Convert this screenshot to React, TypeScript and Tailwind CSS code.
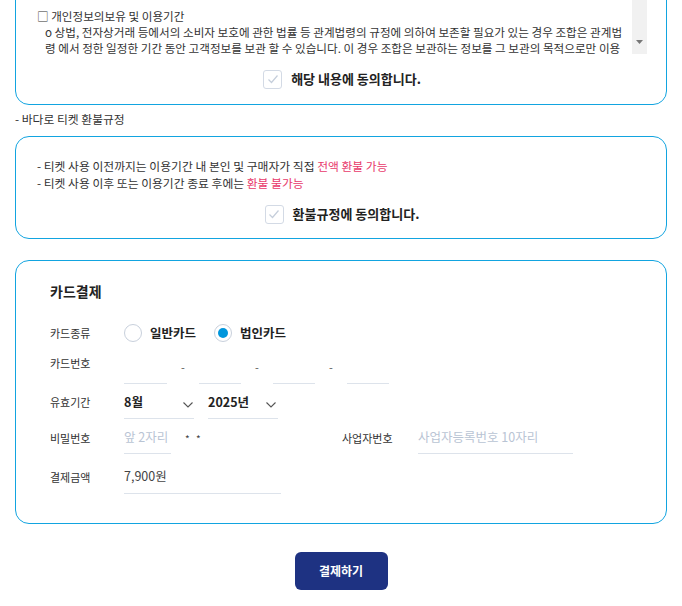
import React from "react";

const font = { fontFamily: '"Noto Sans CJK KR", "Noto Sans", sans-serif' };

function AgreeBox({ label }: { label: string }) {
  return (
    <div className="flex items-center justify-center">
      <span className="w-[19px] h-[19px] border border-[#d3dae5] rounded-[3px] flex items-center justify-center bg-white">
        <svg width="12" height="10" viewBox="0 0 12 10" fill="none">
          <polyline points="1.5,5.5 4.5,8.5 10.5,1.5" stroke="#c5cedb" strokeWidth="1.2" />
        </svg>
      </span>
      <span className="ml-[9px] text-[13px] font-bold text-[#222] leading-[20px]">{label}</span>
    </div>
  );
}

function Chevron() {
  return (
    <svg width="10" height="6" viewBox="0 0 10 6" fill="none">
      <polyline points="0.5,0.5 5,5 9.5,0.5" stroke="#555" strokeWidth="1.1" />
    </svg>
  );
}

export default function App() {
  return (
    <div className="bg-white min-h-screen px-[15px] pb-[16px] text-[#333]" style={font}>
      {/* 개인정보 동의 */}
      <div className="-mt-[24px] border border-[#12a4e0] rounded-[14px] pl-[21px] pr-[19px] pb-[15px]">
        <div className="flex h-[77px]">
          <div className="flex-1 overflow-hidden pt-[31px] text-[11.6px] leading-[16px] text-[#333]">
            <p>□ 개인정보의보유 및 이용기간</p>
            <p className="pl-[8px]">
              o 상법, 전자상거래 등에서의 소비자 보호에 관한 법률 등 관계법령의 규정에 의하여 보존할 필요가 있는 경우 조합은 관계법령 에서 정한 일정한 기간 동안 고객정보를 보관 할 수 있습니다. 이 경우 조합은 보관하는 정보를 그 보관의 목적으로만 이용
            </p>
          </div>
          <div className="w-[15px] bg-[#f1f1f1] flex flex-col justify-end items-center pb-[10px]">
            <svg width="7" height="4" viewBox="0 0 7 4">
              <polygon points="0,0 7,0 3.5,4" fill="#777" />
            </svg>
          </div>
        </div>
        <div className="mt-[15px]">
          <AgreeBox label="해당 내용에 동의합니다." />
        </div>
      </div>

      <p className="mt-[6px] text-[11.8px] leading-[16px]">- 바다로 티켓 환불규정</p>

      {/* 환불규정 */}
      <div className="mt-[9px] border border-[#12a4e0] rounded-[14px] pl-[21px] pr-[19px] pt-[20px] pb-[14px]">
        <div className="text-[11.8px] leading-[17px] text-[#333]">
          <p>
            - 티켓 사용 이전까지는 이용기간 내 본인 및 구매자가 직접 <span className="text-[#e8396b]">전액 환불 가능</span>
          </p>
          <p>
            - 티켓 사용 이후 또는 이용기간 종료 후에는 <span className="text-[#e8396b]">환불 불가능</span>
          </p>
        </div>
        <div className="mt-[13px]">
          <AgreeBox label="환불규정에 동의합니다." />
        </div>
      </div>

      {/* 카드결제 */}
      <div className="mt-[21px] border border-[#12a4e0] rounded-[14px] pl-[34px] pr-[20px] pt-[20px] pb-[29px]">
        <h2 className="text-[14px] leading-[20px] font-bold text-[#222]">카드결제</h2>

        <div className="mt-[22px] flex items-center h-[20px]">
          <span className="w-[74px] text-[11px] text-[#333]">카드종류</span>
          <span className="w-[18px] h-[18px] rounded-full border border-[#c8d0dc] bg-white" />
          <span className="ml-[8px] text-[12.5px] font-bold text-[#222]">일반카드</span>
          <span className="ml-[18px] w-[18px] h-[18px] rounded-full border border-[#c8d0dc] bg-white flex items-center justify-center">
            <span className="w-[10px] h-[10px] rounded-full bg-[#0096dc]" />
          </span>
          <span className="ml-[8px] text-[12.5px] font-bold text-[#222]">법인카드</span>
        </div>

        <div className="mt-[3px] flex items-center h-[38px]">
          <span className="w-[74px] mb-[4px] text-[11px] text-[#333]">카드번호</span>
          <span className="w-[43px] h-full border-b border-[#dde3eb]" />
          <span className="w-[32px] pl-[14px] pt-[4px] text-[11px] text-[#555]">-</span>
          <span className="w-[42px] h-full border-b border-[#dde3eb]" />
          <span className="w-[32px] pl-[14px] pt-[4px] text-[11px] text-[#555]">-</span>
          <span className="w-[42px] h-full border-b border-[#dde3eb]" />
          <span className="w-[32px] pl-[14px] pt-[4px] text-[11px] text-[#555]">-</span>
          <span className="w-[42px] h-full border-b border-[#dde3eb]" />
        </div>

        <div className="mt-[5px] flex items-center h-[30px]">
          <span className="w-[74px] mb-[3px] text-[11px] text-[#333]">유효기간</span>
          <div className="w-[70px] h-full border-b border-[#dde3eb] flex items-center justify-between pr-[1px] pb-[2px]">
            <span className="text-[12.5px] font-bold text-[#222]">8월</span>
            <span className="mt-[5px]">
              <Chevron />
            </span>
          </div>
          <div className="ml-[14px] w-[70px] h-full border-b border-[#dde3eb] flex items-center justify-between pr-[2px] pb-[2px]">
            <span className="text-[12.5px] font-bold text-[#222]">2025년</span>
            <span className="mt-[5px]">
              <Chevron />
            </span>
          </div>
        </div>

        <div className="mt-[3px] flex items-center h-[32px]">
          <span className="w-[74px] text-[11px] text-[#333]">비밀번호</span>
          <div className="w-[218px] h-full flex items-center">
            <span className="w-[47px] h-full border-b border-[#dde3eb] flex items-center text-[12.5px] text-[#b9c4d4]">
              앞 2자리
            </span>
            <span className="ml-[14px] text-[10px] tracking-[2px] text-[#444]">* *</span>
          </div>
          <span className="w-[76px] text-[11px] text-[#333]">사업자번호</span>
          <span className="w-[155px] h-full border-b border-[#dde3eb] flex items-center text-[12.5px] text-[#b9c4d4]">
            사업자등록번호 10자리
          </span>
        </div>

        <div className="mt-[6px] flex items-center h-[34px]">
          <span className="w-[74px] text-[11px] text-[#333]">결제금액</span>
          <span className="w-[157px] h-full border-b border-[#dde3eb] flex items-center text-[12.5px] text-[#444]">
            7,900원
          </span>
        </div>
      </div>

      <div className="mt-[28px] flex justify-center">
        <button className="w-[93px] h-[38px] rounded-[6px] bg-[#1e3282] text-white text-[12px] font-bold">
          결제하기
        </button>
      </div>
    </div>
  );
}
